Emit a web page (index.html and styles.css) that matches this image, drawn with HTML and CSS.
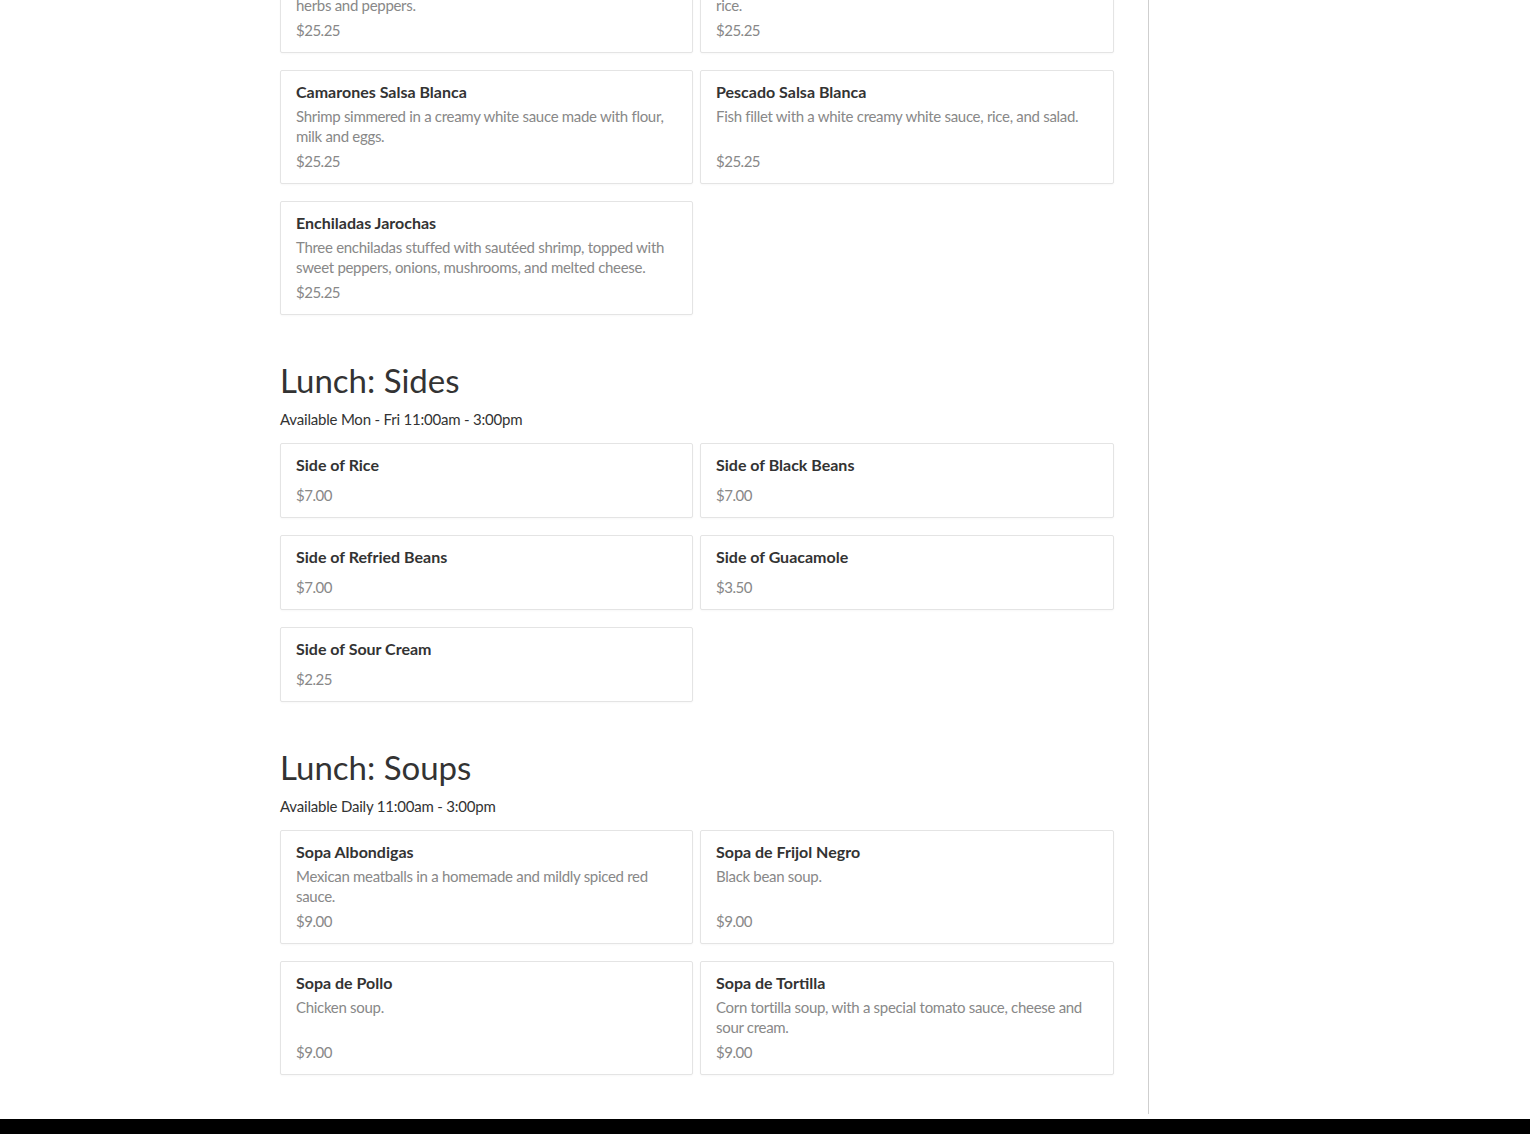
FILE: index.html
```html
<!DOCTYPE html>
<html lang="en">
<head>
<meta charset="utf-8">
<title>Lunch Menu</title>
<link rel="stylesheet" href="styles.css">
</head>
<body>
<div class="page">
  <main class="menu">
    <section class="menu-section menu-section--continued">
      <div class="items">
        <article class="item">
          <h3 class="item-title">Camarones al Mojo de Ajo</h3>
          <p class="item-desc">Shrimp sautéed in a garlic butter sauce with fresh<br>herbs and peppers.</p>
          <p class="item-price">$25.25</p>
        </article>
        <article class="item">
          <h3 class="item-title">Camarones a la Diabla</h3>
          <p class="item-desc">Shrimp in a spicy red sauce, served with salad and<br>rice.</p>
          <p class="item-price">$25.25</p>
        </article>
        <article class="item">
          <h3 class="item-title">Camarones Salsa Blanca</h3>
          <p class="item-desc">Shrimp simmered in a creamy white sauce made with flour, milk and eggs.</p>
          <p class="item-price">$25.25</p>
        </article>
        <article class="item">
          <h3 class="item-title">Pescado Salsa Blanca</h3>
          <p class="item-desc">Fish fillet with a white creamy white sauce, rice, and salad.</p>
          <p class="item-price">$25.25</p>
        </article>
        <article class="item">
          <h3 class="item-title">Enchiladas Jarochas</h3>
          <p class="item-desc">Three enchiladas stuffed with sautéed shrimp, topped with sweet peppers, onions, mushrooms, and melted cheese.</p>
          <p class="item-price">$25.25</p>
        </article>
      </div>
    </section>

    <section class="menu-section">
      <h2 class="section-title">Lunch: Sides</h2>
      <p class="section-note">Available Mon - Fri 11:00am - 3:00pm</p>
      <div class="items">
        <article class="item">
          <h3 class="item-title">Side of Rice</h3>
          <p class="item-price">$7.00</p>
        </article>
        <article class="item">
          <h3 class="item-title">Side of Black Beans</h3>
          <p class="item-price">$7.00</p>
        </article>
        <article class="item">
          <h3 class="item-title">Side of Refried Beans</h3>
          <p class="item-price">$7.00</p>
        </article>
        <article class="item">
          <h3 class="item-title">Side of Guacamole</h3>
          <p class="item-price">$3.50</p>
        </article>
        <article class="item">
          <h3 class="item-title">Side of Sour Cream</h3>
          <p class="item-price">$2.25</p>
        </article>
      </div>
    </section>

    <section class="menu-section">
      <h2 class="section-title">Lunch: Soups</h2>
      <p class="section-note">Available Daily 11:00am - 3:00pm</p>
      <div class="items">
        <article class="item">
          <h3 class="item-title">Sopa Albondigas</h3>
          <p class="item-desc">Mexican meatballs in a homemade and mildly spiced red sauce.</p>
          <p class="item-price">$9.00</p>
        </article>
        <article class="item">
          <h3 class="item-title">Sopa de Frijol Negro</h3>
          <p class="item-desc">Black bean soup.</p>
          <p class="item-price">$9.00</p>
        </article>
        <article class="item">
          <h3 class="item-title">Sopa de Pollo</h3>
          <p class="item-desc">Chicken soup.</p>
          <p class="item-price">$9.00</p>
        </article>
        <article class="item">
          <h3 class="item-title">Sopa de Tortilla</h3>
          <p class="item-desc">Corn tortilla soup, with a special tomato sauce, cheese and sour cream.</p>
          <p class="item-price">$9.00</p>
        </article>
      </div>
    </section>
  </main>
  <aside class="sidebar"></aside>
</div>
<footer class="footer"></footer>
</body>
</html>
```

FILE: styles.css
```css
* {
  box-sizing: border-box;
}

html, body {
  margin: 0;
  padding: 0;
  background: #fff;
}

body {
  font-family: Lato, "Source Sans Pro", "Open Sans", sans-serif;
  color: #333;
  font-size: 15px;
  line-height: 20px;
  overflow: hidden;
}

.page {
  display: flex;
  padding-bottom: 5px;
}

.menu {
  width: 1148px;
  flex: none;
  padding: 0 34px 39px 280px;
}

.sidebar {
  flex: 1;
  border-left: 1px solid #cfcfcf;
}

.menu-section {
  margin-top: 45px;
}

.menu-section--continued {
  margin-top: -61px;
}

.section-title {
  margin: 0;
  font-size: 33px;
  line-height: 40px;
  font-weight: 400;
  color: #333;
}

.section-note {
  margin: 9px 0 14px;
  font-size: 15px;
  line-height: 20px;
  letter-spacing: -0.2px;
  color: #333;
}

.items {
  display: grid;
  grid-template-columns: 413px 1fr;
  column-gap: 7px;
  row-gap: 17px;
}

.item {
  display: flex;
  flex-direction: column;
  border: 1px solid #e4e4e4;
  border-radius: 2px;
  padding: 9px 15px 12px;
  box-shadow: 0 1px 2px rgba(0, 0, 0, 0.03);
  background: #fff;
}

.item-title {
  margin: 0;
  font-size: 16px;
  line-height: 24px;
  font-weight: 700;
  color: #333;
}

.item-desc {
  flex: 1;
  margin: 2px 0 0;
  min-height: 40px;
  letter-spacing: -0.3px;
  color: #888;
}

.item-price {
  margin: 5px 0 0;
  letter-spacing: -0.5px;
  color: #888;
}

.item-title + .item-price {
  margin-top: 8px;
}

.footer {
  height: 200px;
  background: #000;
}
```
